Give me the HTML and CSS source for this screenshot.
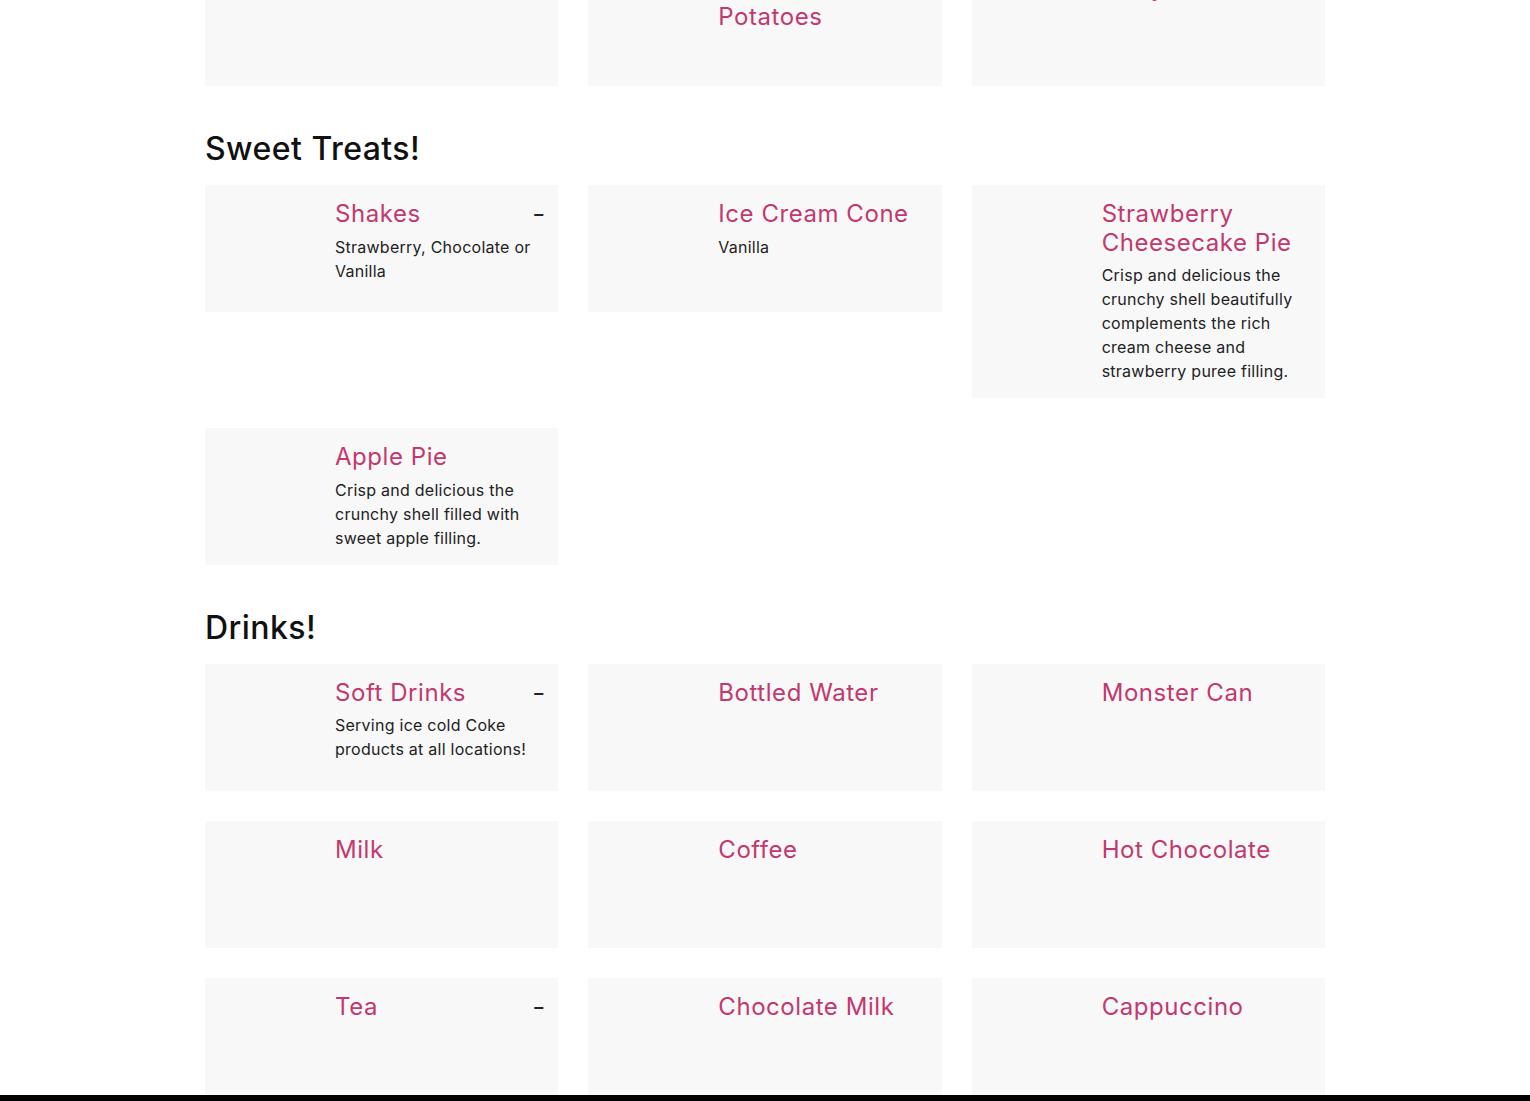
FILE: index.html
```html
<!DOCTYPE html>
<html lang="en">
<head>
<meta charset="utf-8">
<title>Menu</title>
<link rel="stylesheet" href="styles.css">
</head>
<body>
<main class="menu">
  <section class="menu-section">
    <h2 class="section-title">Sides!</h2>
    <div class="grid">
      <article class="card">
        <div class="card-img"></div>
        <div class="card-body">
          <div class="card-head"><h3 class="card-title">French Fries</h3><span class="price">–</span></div>
        </div>
      </article>
      <article class="card">
        <div class="card-img"></div>
        <div class="card-body">
          <div class="card-head"><h3 class="card-title">Seasoned Potatoes</h3></div>
        </div>
      </article>
      <article class="card">
        <div class="card-img"></div>
        <div class="card-body">
          <div class="card-head"><h3 class="card-title">Curly Fries</h3></div>
        </div>
      </article>
    </div>
  </section>

  <section class="menu-section">
    <h2 class="section-title">Sweet Treats!</h2>
    <div class="grid">
      <article class="card">
        <div class="card-img"></div>
        <div class="card-body">
          <div class="card-head"><h3 class="card-title">Shakes</h3><span class="price">–</span></div>
          <p class="card-desc">Strawberry, Chocolate or Vanilla</p>
        </div>
      </article>
      <article class="card">
        <div class="card-img"></div>
        <div class="card-body">
          <div class="card-head"><h3 class="card-title">Ice Cream Cone</h3></div>
          <p class="card-desc">Vanilla</p>
        </div>
      </article>
      <article class="card">
        <div class="card-img"></div>
        <div class="card-body">
          <div class="card-head"><h3 class="card-title">Strawberry Cheesecake Pie</h3></div>
          <p class="card-desc">Crisp and delicious the crunchy shell beautifully complements the rich cream cheese and strawberry puree filling.</p>
        </div>
      </article>
      <article class="card">
        <div class="card-img"></div>
        <div class="card-body">
          <div class="card-head"><h3 class="card-title">Apple Pie</h3></div>
          <p class="card-desc">Crisp and delicious the crunchy shell filled with sweet apple filling.</p>
        </div>
      </article>
    </div>
  </section>

  <section class="menu-section">
    <h2 class="section-title">Drinks!</h2>
    <div class="grid">
      <article class="card">
        <div class="card-img"></div>
        <div class="card-body">
          <div class="card-head"><h3 class="card-title">Soft Drinks</h3><span class="price">–</span></div>
          <p class="card-desc">Serving ice cold Coke products at all locations!</p>
        </div>
      </article>
      <article class="card">
        <div class="card-img"></div>
        <div class="card-body">
          <div class="card-head"><h3 class="card-title">Bottled Water</h3></div>
        </div>
      </article>
      <article class="card">
        <div class="card-img"></div>
        <div class="card-body">
          <div class="card-head"><h3 class="card-title">Monster Can</h3></div>
        </div>
      </article>
      <article class="card">
        <div class="card-img"></div>
        <div class="card-body">
          <div class="card-head"><h3 class="card-title">Milk</h3></div>
        </div>
      </article>
      <article class="card">
        <div class="card-img"></div>
        <div class="card-body">
          <div class="card-head"><h3 class="card-title">Coffee</h3></div>
        </div>
      </article>
      <article class="card">
        <div class="card-img"></div>
        <div class="card-body">
          <div class="card-head"><h3 class="card-title">Hot Chocolate</h3></div>
        </div>
      </article>
      <article class="card">
        <div class="card-img"></div>
        <div class="card-body">
          <div class="card-head"><h3 class="card-title">Tea</h3><span class="price">–</span></div>
        </div>
      </article>
      <article class="card">
        <div class="card-img"></div>
        <div class="card-body">
          <div class="card-head"><h3 class="card-title">Chocolate Milk</h3></div>
        </div>
      </article>
      <article class="card">
        <div class="card-img"></div>
        <div class="card-body">
          <div class="card-head"><h3 class="card-title">Cappuccino</h3></div>
        </div>
      </article>
    </div>
  </section>
</main>
<div class="bottom-bar"></div>
</body>
</html>
```
FILE: styles.css
```css
* { box-sizing: border-box; }

html, body {
  margin: 0;
  padding: 0;
  background: #ffffff;
}

body {
  font-family: Inter, "Noto Sans", "Liberation Sans", sans-serif;
  color: #222222;
  overflow: hidden;
}

.menu {
  width: 1120px;
  margin: -95px auto 0;
  padding-bottom: 40px;
}

.menu-section + .menu-section {
  margin-top: 44px;
}

.section-title {
  margin: 0 0 16px;
  font-size: 32px;
  line-height: 1.2;
  font-weight: 500;
  letter-spacing: 0.45px;
  color: #111111;
}

.grid {
  display: grid;
  grid-template-columns: repeat(3, 1fr);
  gap: 30px;
  align-items: start;
}

.card {
  display: flex;
  gap: 15px;
  padding: 15px;
  background: #f8f8f8;
  align-items: flex-start;
}

.card-img {
  flex: 0 0 100px;
  height: 97px;
}

.card-body {
  flex: 1;
  min-width: 0;
}

.card-head {
  display: flex;
  align-items: center;
  justify-content: space-between;
  gap: 10px;
}

.card-title {
  margin: 0;
  font-size: 24px;
  line-height: 1.2;
  font-weight: 400;
  letter-spacing: 0.55px;
  color: #c2386f;
}

.price {
  font-size: 18px;
  line-height: 24px;
  font-weight: 600;
  color: #222222;
  flex: 0 0 auto;
}

.card-desc {
  margin: 6px 0 0;
  font-size: 16px;
  line-height: 24px;
  letter-spacing: 0.25px;
  color: #222222;
}

.bottom-bar {
  position: fixed;
  left: 0;
  right: 0;
  bottom: 0;
  height: 6px;
  background: #000000;
}
```
